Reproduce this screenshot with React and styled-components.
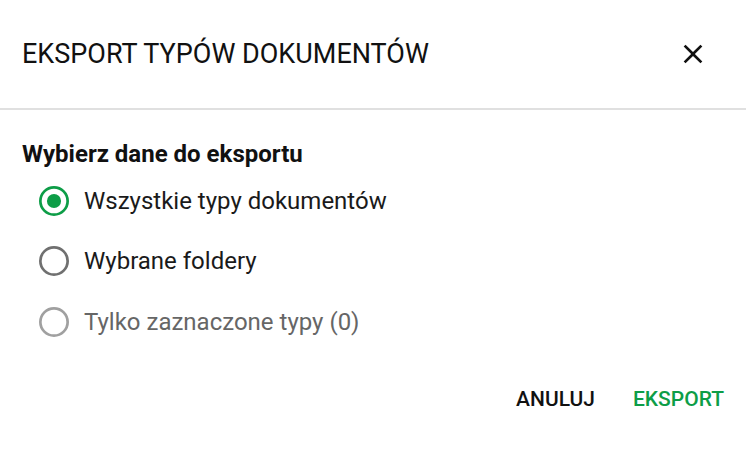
import React, { useState } from "react";
import styled, { createGlobalStyle } from "styled-components";

const GlobalStyle = createGlobalStyle`
  html, body {
    margin: 0;
    padding: 0;
    background: #fff;
  }
  body {
    font-family: Roboto, "Liberation Sans", sans-serif;
    color: rgba(0, 0, 0, 0.87);
  }
`;

const Dialog = styled.div`
  width: 746px;
  height: 450px;
  background: #fff;
  box-sizing: border-box;
  display: flex;
  flex-direction: column;
`;

const Header = styled.div`
  height: 108px;
  display: flex;
  align-items: center;
  justify-content: space-between;
  padding: 0 37px 0 22px;
  border-bottom: 2px solid #e0e0e0;
`;

const Title = styled.h2`
  margin: 0;
  font-size: 27px;
  font-weight: 400;
  line-height: 32px;
  color: #111;
`;

const CloseBtn = styled.button`
  width: 32px;
  height: 32px;
  padding: 0;
  border: 0;
  background: none;
  display: flex;
  align-items: center;
  justify-content: center;
  cursor: pointer;
  color: #111;
`;

const Body = styled.div`
  padding: 30px 22px 0;
`;

const Heading = styled.div`
  font-size: 24px;
  font-weight: 700;
  line-height: 28px;
  color: #111;
  margin-bottom: 3px;
`;

const Options = styled.div`
  display: flex;
  flex-direction: column;
`;

const Option = styled.label`
  height: 60.5px;
  display: flex;
  align-items: center;
  padding-left: 14px;
  gap: 12px;
  cursor: ${(p) => (p.$disabled ? "default" : "pointer")};
  font-size: 24px;
  color: ${(p) => (p.$disabled ? "#666" : "#1a1a1a")};
`;

const HiddenInput = styled.input`
  display: none;
`;

const Footer = styled.div`
  margin-top: auto;
  height: 98px;
  display: flex;
  align-items: center;
  justify-content: flex-end;
  gap: 38px;
  padding: 0 22px 0 0;
`;

const TextButton = styled.button`
  border: 0;
  background: none;
  padding: 0;
  font-family: Roboto, "Liberation Sans", sans-serif;
  font-size: 21px;
  font-weight: 500;
  text-transform: uppercase;
  color: ${(p) => (p.$primary ? "#0d9d47" : "#111")};
  cursor: pointer;
  margin-bottom: 4px;
`;

const RadioIcon = ({ checked, disabled }) => {
  const color = checked ? "#0d9d47" : disabled ? "#a0a0a0" : "#707070";
  return (
    <svg width="36" height="36" viewBox="0 0 24 24">
      <circle cx="12" cy="12" r="9.1" fill="none" stroke={color} strokeWidth="1.8" />
      {checked && <circle cx="12" cy="12" r="4.7" fill={color} />}
    </svg>
  );
};

const options = [
  { id: "all", label: "Wszystkie typy dokumentów" },
  { id: "folders", label: "Wybrane foldery" },
  { id: "selected", label: "Tylko zaznaczone typy (0)", disabled: true },
];

export default function App() {
  const [value, setValue] = useState("all");

  return (
    <>
      <GlobalStyle />
      <Dialog>
        <Header>
          <Title>EKSPORT TYPÓW DOKUMENTÓW</Title>
          <CloseBtn type="button" aria-label="Zamknij">
            <svg width="32" height="32" viewBox="0 0 24 24">
              <path
                d="M19 6.41 17.59 5 12 10.59 6.41 5 5 6.41 10.59 12 5 17.59 6.41 19 12 13.41 17.59 19 19 17.59 13.41 12z"
                fill="currentColor"
              />
            </svg>
          </CloseBtn>
        </Header>
        <Body>
          <Heading>Wybierz dane do eksportu</Heading>
          <Options>
            {options.map((o) => (
              <Option key={o.id} $disabled={o.disabled}>
                <HiddenInput
                  type="radio"
                  name="export"
                  checked={value === o.id}
                  disabled={o.disabled}
                  onChange={() => setValue(o.id)}
                />
                <RadioIcon checked={value === o.id} disabled={o.disabled} />
                {o.label}
              </Option>
            ))}
          </Options>
        </Body>
        <Footer>
          <TextButton type="button">Anuluj</TextButton>
          <TextButton type="button" $primary>
            Eksport
          </TextButton>
        </Footer>
      </Dialog>
    </>
  );
}
